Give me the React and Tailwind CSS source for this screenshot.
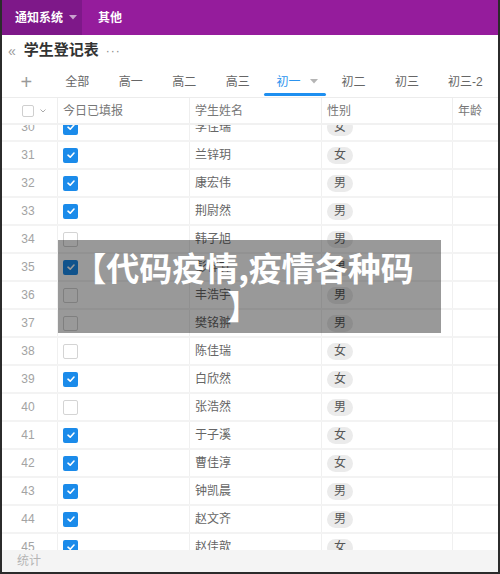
import React from "react";

const rows = [
  [30, true, "李佳瑞", "女"],
  [31, true, "兰锌玥", "女"],
  [32, true, "康宏伟", "男"],
  [33, true, "荆尉然", "男"],
  [34, false, "韩子旭", "男"],
  [35, true, "彭梓轩", "男"],
  [36, false, "丰浩宇", "男"],
  [37, false, "樊铭翀", "男"],
  [38, false, "陈佳瑞", "女"],
  [39, true, "白欣然", "女"],
  [40, false, "张浩然", "男"],
  [41, true, "于子溪", "女"],
  [42, true, "曹佳淳", "女"],
  [43, true, "钟凯晨", "男"],
  [44, true, "赵文齐", "男"],
  [45, true, "赵佳歆", "女"],
];

function Check({ on }) {
  if (on) {
    return (
      <div className="w-[15px] h-[15px] rounded-[2px] bg-[#1b8bea] flex items-center justify-center">
        <svg width="10" height="10" viewBox="0 0 10 10">
          <path d="M2 5.2 L4.2 7.2 L8 3" stroke="white" strokeWidth="1.6" fill="none" strokeLinecap="round" strokeLinejoin="round" />
        </svg>
      </div>
    );
  }
  return <div className="w-[15px] h-[15px] rounded-[2px] border border-[#d4d4d4] bg-white" />;
}

const tabs = [
  ["全部", "w-[54px]"],
  ["高一", "w-[54px]"],
  ["高二", "w-[54px]"],
  ["高三", "w-[54px]"],
];

export default function App() {
  return (
    <div
      className="w-[500px] h-[574px] bg-white border-2 border-t-0 border-[#2b2b2b] flex flex-col overflow-hidden relative"
      style={{ fontFamily: '"Liberation Sans", "Noto Sans CJK SC", sans-serif' }}
    >
      {/* top bar */}
      <div className="h-[35px] shrink-0 bg-[#951c9c] flex items-stretch text-white text-[12px] font-bold">
        <div className="w-[80px] bg-[#7e1889] flex items-center pl-[13px] gap-[6px]">
          <span>通知系统</span>
          <svg width="8" height="5" viewBox="0 0 8 5">
            <path d="M0 0 L8 0 L4 4.5 Z" fill="#c9a3cf" />
          </svg>
        </div>
        <div className="flex items-center pl-[16px]">其他</div>
      </div>

      {/* title */}
      <div className="h-[31px] shrink-0 flex items-center pl-[6px]">
        <span className="text-[#9a9a9a] text-[14px] leading-none">«</span>
        <span className="ml-[8px] text-[15px] font-bold text-[#333]">学生登记表</span>
        <span className="ml-[7px] text-[#888] text-[12px] tracking-[1px]">···</span>
      </div>

      {/* tabs */}
      <div className="h-[32px] shrink-0 flex items-stretch border-b border-[#ececec] text-[12px] text-[#666] whitespace-nowrap">
        <div className="w-[49px] flex items-center justify-center text-[#999] text-[20px] font-light leading-none">+</div>
        {tabs.map(([t, w]) => (
          <div key={t} className={`${w} flex items-center justify-center`}>{t}</div>
        ))}
        <div className="w-[62px] relative flex items-center justify-center gap-[9px] text-[#2c93ee]">
          <span className="ml-[4px]">初一</span>
          <svg width="8" height="5" viewBox="0 0 8 5">
            <path d="M0 0 L8 0 L4 4.5 Z" fill="#b5b5b5" />
          </svg>
          <div className="absolute left-0 right-0 bottom-[1px] h-[3px] rounded-full bg-[#1e8ff0]" />
        </div>
        <div className="w-[56px] flex items-center justify-center">初二</div>
        <div className="w-[52px] flex items-center justify-center">初三</div>
        <div className="w-[66px] flex items-center justify-center">初三-2</div>
      </div>

      {/* header */}
      <div className="h-[27px] shrink-0 flex items-stretch border-b-2 border-[#f1f1f1] text-[12px] text-[#777]">
        <div className="w-[55px] flex items-center pl-[20px] gap-[6px]">
          <div className="w-[12px] h-[12px] rounded-[2px] border border-[#cfcfcf]" />
          <svg width="6" height="4" viewBox="0 0 6 4">
            <path d="M0.5 0.5 L3 3 L5.5 0.5" stroke="#aaa" fill="none" strokeWidth="1" />
          </svg>
        </div>
        <div className="w-[132px] border-l border-[#eeeeee] flex items-center pl-[5px]">今日已填报</div>
        <div className="w-[132px] border-l border-[#eeeeee] flex items-center pl-[5px]">学生姓名</div>
        <div className="w-[131px] border-l border-[#eeeeee] flex items-center pl-[5px]">性别</div>
        <div className="flex-1 border-l border-[#eeeeee] flex items-center pl-[5px]">年龄</div>
      </div>

      {/* body */}
      <div className="flex-1 overflow-hidden">
        <div className="-mt-[11px]">
          {rows.map(([n, on, name, sex]) => (
            <div key={n} className="h-[28px] flex items-stretch border-b-2 border-[#f3f3f3] text-[12px]">
              <div className="w-[55px] flex items-center justify-center text-[#a3a3a3] pr-[3px]">{n}</div>
              <div className="w-[132px] border-l border-[#f0f0f0] flex items-center pl-[5px]">
                <Check on={on} />
              </div>
              <div className="w-[132px] border-l border-[#f0f0f0] flex items-center pl-[5px] text-[#666]">{name}</div>
              <div className="w-[131px] border-l border-[#f0f0f0] flex items-center pl-[5px]">
                <span className="w-[26px] h-[17px] rounded-full bg-[#ebebeb] text-[#555] flex items-center justify-center leading-none">{sex}</span>
              </div>
              <div className="flex-1 border-l border-[#f0f0f0]" />
            </div>
          ))}
        </div>
      </div>

      {/* footer */}
      <div className="h-[22px] shrink-0 bg-[#f4f4f4] flex items-center pl-[15px] text-[12px] text-[#b5b5b5]">统计</div>

      {/* overlay */}
      <div className="absolute left-[56px] top-[240px] w-[383px] h-[93px] bg-black/40 flex items-center justify-center pr-[12px] pb-[2px]">
        <div className="text-white font-bold text-[33px] leading-[38px] text-center whitespace-nowrap" style={{ fontFamily: '"Noto Sans CJK SC", sans-serif' }}>
          【代码疫情,疫情各种码
          <br />
          】
        </div>
      </div>
    </div>
  );
}
